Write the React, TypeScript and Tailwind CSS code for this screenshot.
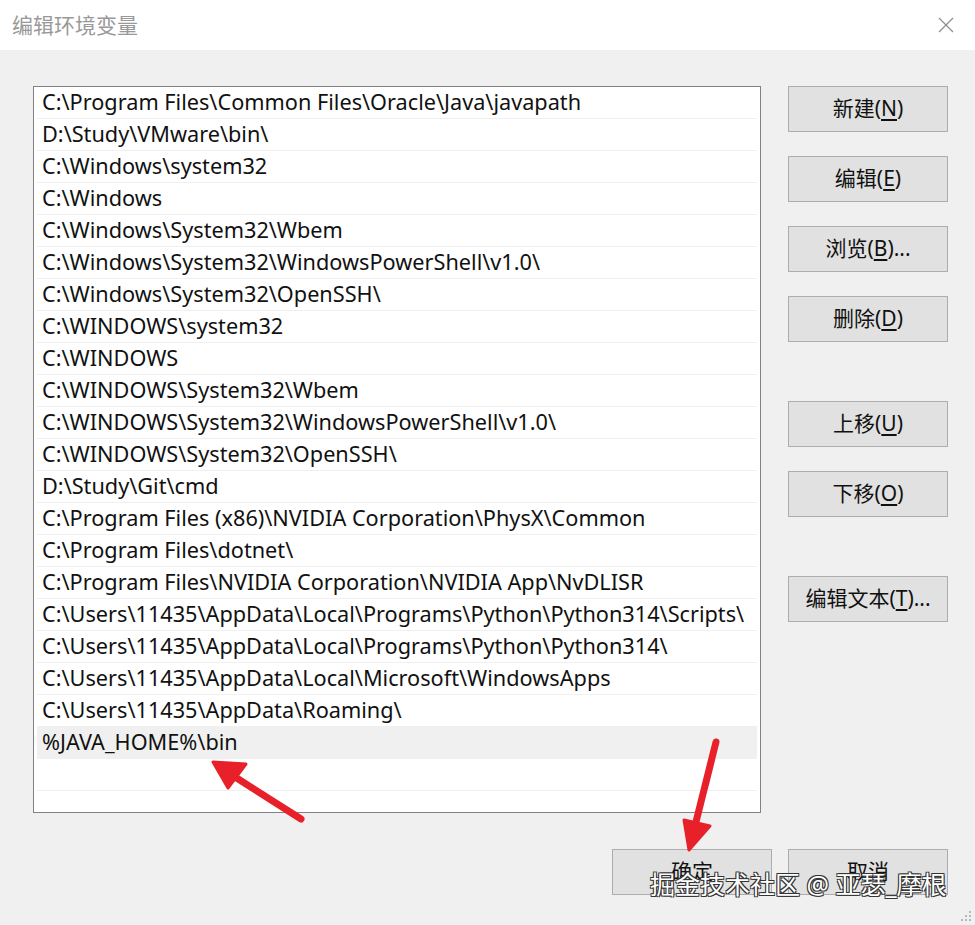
import React from 'react';

const paths: string[] = [
  'C:\\Program Files\\Common Files\\Oracle\\Java\\javapath',
  'D:\\Study\\VMware\\bin\\',
  'C:\\Windows\\system32',
  'C:\\Windows',
  'C:\\Windows\\System32\\Wbem',
  'C:\\Windows\\System32\\WindowsPowerShell\\v1.0\\',
  'C:\\Windows\\System32\\OpenSSH\\',
  'C:\\WINDOWS\\system32',
  'C:\\WINDOWS',
  'C:\\WINDOWS\\System32\\Wbem',
  'C:\\WINDOWS\\System32\\WindowsPowerShell\\v1.0\\',
  'C:\\WINDOWS\\System32\\OpenSSH\\',
  'D:\\Study\\Git\\cmd',
  'C:\\Program Files (x86)\\NVIDIA Corporation\\PhysX\\Common',
  'C:\\Program Files\\dotnet\\',
  'C:\\Program Files\\NVIDIA Corporation\\NVIDIA App\\NvDLISR',
  'C:\\Users\\11435\\AppData\\Local\\Programs\\Python\\Python314\\Scripts\\',
  'C:\\Users\\11435\\AppData\\Local\\Programs\\Python\\Python314\\',
  'C:\\Users\\11435\\AppData\\Local\\Microsoft\\WindowsApps',
  'C:\\Users\\11435\\AppData\\Roaming\\',
  '%JAVA_HOME%\\bin',
  '',
  '',
];

const font = { fontFamily: '"Noto Sans", "Noto Sans CJK SC", sans-serif' };

interface BtnProps {
  label: string;
  hotkey?: string;
  suffix?: string;
}

const DlgButton: React.FC<BtnProps> = ({ label, hotkey, suffix }) => (
  <div className="w-[160px] h-[46px] shrink-0 bg-[#e1e1e1] border border-[#adadad] flex items-center justify-center text-[21px] text-[#111]">
    <span>
      {label}
      {hotkey && (
        <>
          (<span className="underline underline-offset-[3px]">{hotkey}</span>)
        </>
      )}
      {suffix}
    </span>
  </div>
);

const App: React.FC = () => {
  return (
    <div className="relative w-[975px] h-[925px] bg-[#f0f0f0] overflow-hidden" style={font}>
      {/* title bar */}
      <div className="h-[50px] bg-white flex items-center justify-between pl-[12px] pr-[21px]">
        <span className="text-[21px] text-[#999999] leading-none">编辑环境变量</span>
        <svg width="16" height="16" viewBox="0 0 16 16">
          <path d="M1 1L15 15M15 1L1 15" stroke="#8c8c8c" strokeWidth="1.2" />
        </svg>
      </div>

      <div className="pl-[33px] pt-[36px]">
        <div className="flex">
          {/* path list */}
          <div className="w-[728px] h-[727px] bg-white border border-[#828282] overflow-hidden">
            {paths.map((p, i) => (
              <div
                key={i}
                className={`h-[32px] mx-[3px] pl-[5px] flex items-center border-b border-[#f0f0f0] text-[21.7px] text-[#111] whitespace-nowrap ${
                  i === 20 ? 'bg-[#f0f0f0]' : ''
                }`}
              >
                {p}
              </div>
            ))}
          </div>

          {/* side buttons */}
          <div className="ml-[27px] flex flex-col">
            <div className="flex flex-col gap-[24px]">
              <DlgButton label="新建" hotkey="N" />
              <DlgButton label="编辑" hotkey="E" />
              <DlgButton label="浏览" hotkey="B" suffix="..." />
              <DlgButton label="删除" hotkey="D" />
            </div>
            <div className="mt-[59px] flex flex-col gap-[24px]">
              <DlgButton label="上移" hotkey="U" />
              <DlgButton label="下移" hotkey="O" />
            </div>
            <div className="mt-[59px]">
              <DlgButton label="编辑文本" hotkey="T" suffix="..." />
            </div>
          </div>
        </div>

        {/* OK / Cancel */}
        <div className="mt-[36px] flex justify-end gap-[16px] pr-[27px]">
          <DlgButton label="确定" />
          <DlgButton label="取消" />
        </div>
      </div>

      {/* annotation arrows */}
      <svg className="absolute inset-0 pointer-events-none" width="975" height="925">
        <line x1="301" y1="819" x2="232" y2="775" stroke="#e8202a" strokeWidth="7" strokeLinecap="round" />
        <polygon points="213,762 246,764 228,788" fill="#e8202a" stroke="#e8202a" strokeWidth="3" strokeLinejoin="round" />
        <line x1="716" y1="742" x2="695" y2="826" stroke="#e8202a" strokeWidth="7" strokeLinecap="round" />
        <polygon points="689,850 684,820 710,826" fill="#e8202a" stroke="#e8202a" strokeWidth="3" strokeLinejoin="round" />
      </svg>

      {/* resize grip */}
      <svg className="absolute right-[3px] bottom-[3px]" width="12" height="12" viewBox="0 0 12 12">
        <g fill="#b8b8b8">
          <rect x="9" y="1" width="2" height="2" />
          <rect x="5" y="5" width="2" height="2" />
          <rect x="9" y="5" width="2" height="2" />
          <rect x="1" y="9" width="2" height="2" />
          <rect x="5" y="9" width="2" height="2" />
          <rect x="9" y="9" width="2" height="2" />
        </g>
      </svg>

      {/* watermark */}
      <div
        className="absolute left-[650px] top-[872px] text-[25px] leading-none text-white whitespace-nowrap"
        style={{ textShadow: '1px 1px 0 #333, -1px -1px 0 #333, 1px -1px 0 #333, -1px 1px 0 #333' }}
      >
        掘金技术社区 @ 亚瑟_摩根
      </div>
    </div>
  );
};

export default App;
